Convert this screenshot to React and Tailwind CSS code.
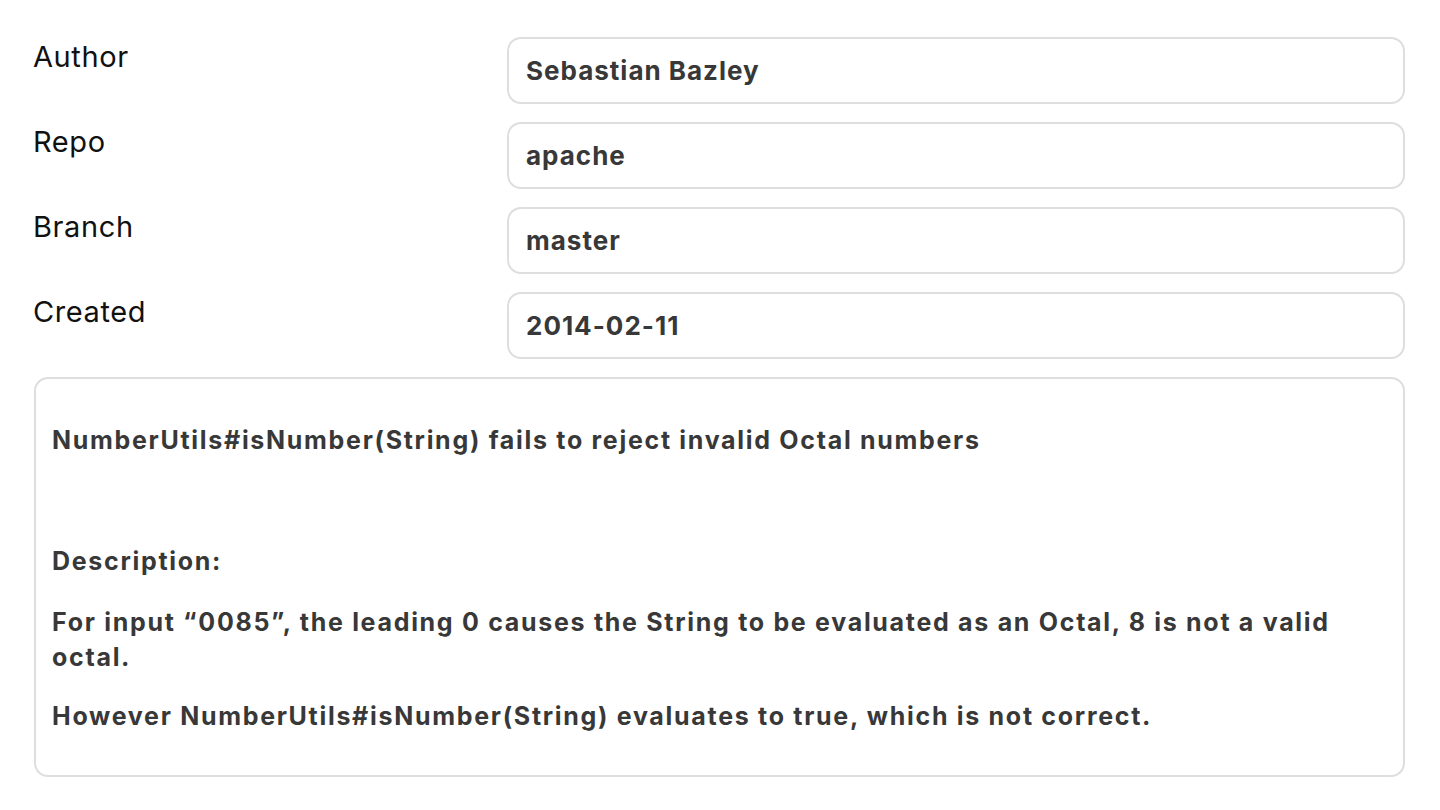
import React from 'react';

const fields = [
  { label: 'Author', value: 'Sebastian Bazley' },
  { label: 'Repo', value: 'apache' },
  { label: 'Branch', value: 'master' },
  { label: 'Created', value: '2014-02-11' },
];

const App = () => {
  return (
    <div className="min-h-[810px] bg-white pl-[33px] pr-[35px] pt-[37px] font-['Inter',sans-serif]">
      <div className="flex flex-col gap-[18px]">
        {fields.map((field) => (
          <div key={field.label} className="flex">
            <div className="w-[474px] shrink-0 pt-[2px] text-[29px] leading-[36px] tracking-[0.6px] text-[#111]">
              {field.label}
            </div>
            <div className="flex h-[67px] flex-1 items-center rounded-[14px] border-2 border-[#dedede] px-[17px] text-[26px] font-bold tracking-[1px] text-[#383838]">
              {field.value}
            </div>
          </div>
        ))}
      </div>
      <div className="ml-[1px] mt-[18px] h-[400px] rounded-[14px] border-2 border-[#dedede] px-[16px] pt-[44px] text-[25px] font-bold leading-[35px] tracking-[1.7px] text-[#383838]">
        <p>NumberUtils#isNumber(String) fails to reject invalid Octal numbers</p>
        <p className="mt-[86px]">Description:</p>
        <p className="mt-[26px] pr-[50px]">
          For input “0085”, the leading 0 causes the String to be evaluated as an Octal, 8 is not a valid octal.
        </p>
        <p className="mt-[24px]">However NumberUtils#isNumber(String) evaluates to true, which is not correct.</p>
      </div>
    </div>
  );
};

export default App;
